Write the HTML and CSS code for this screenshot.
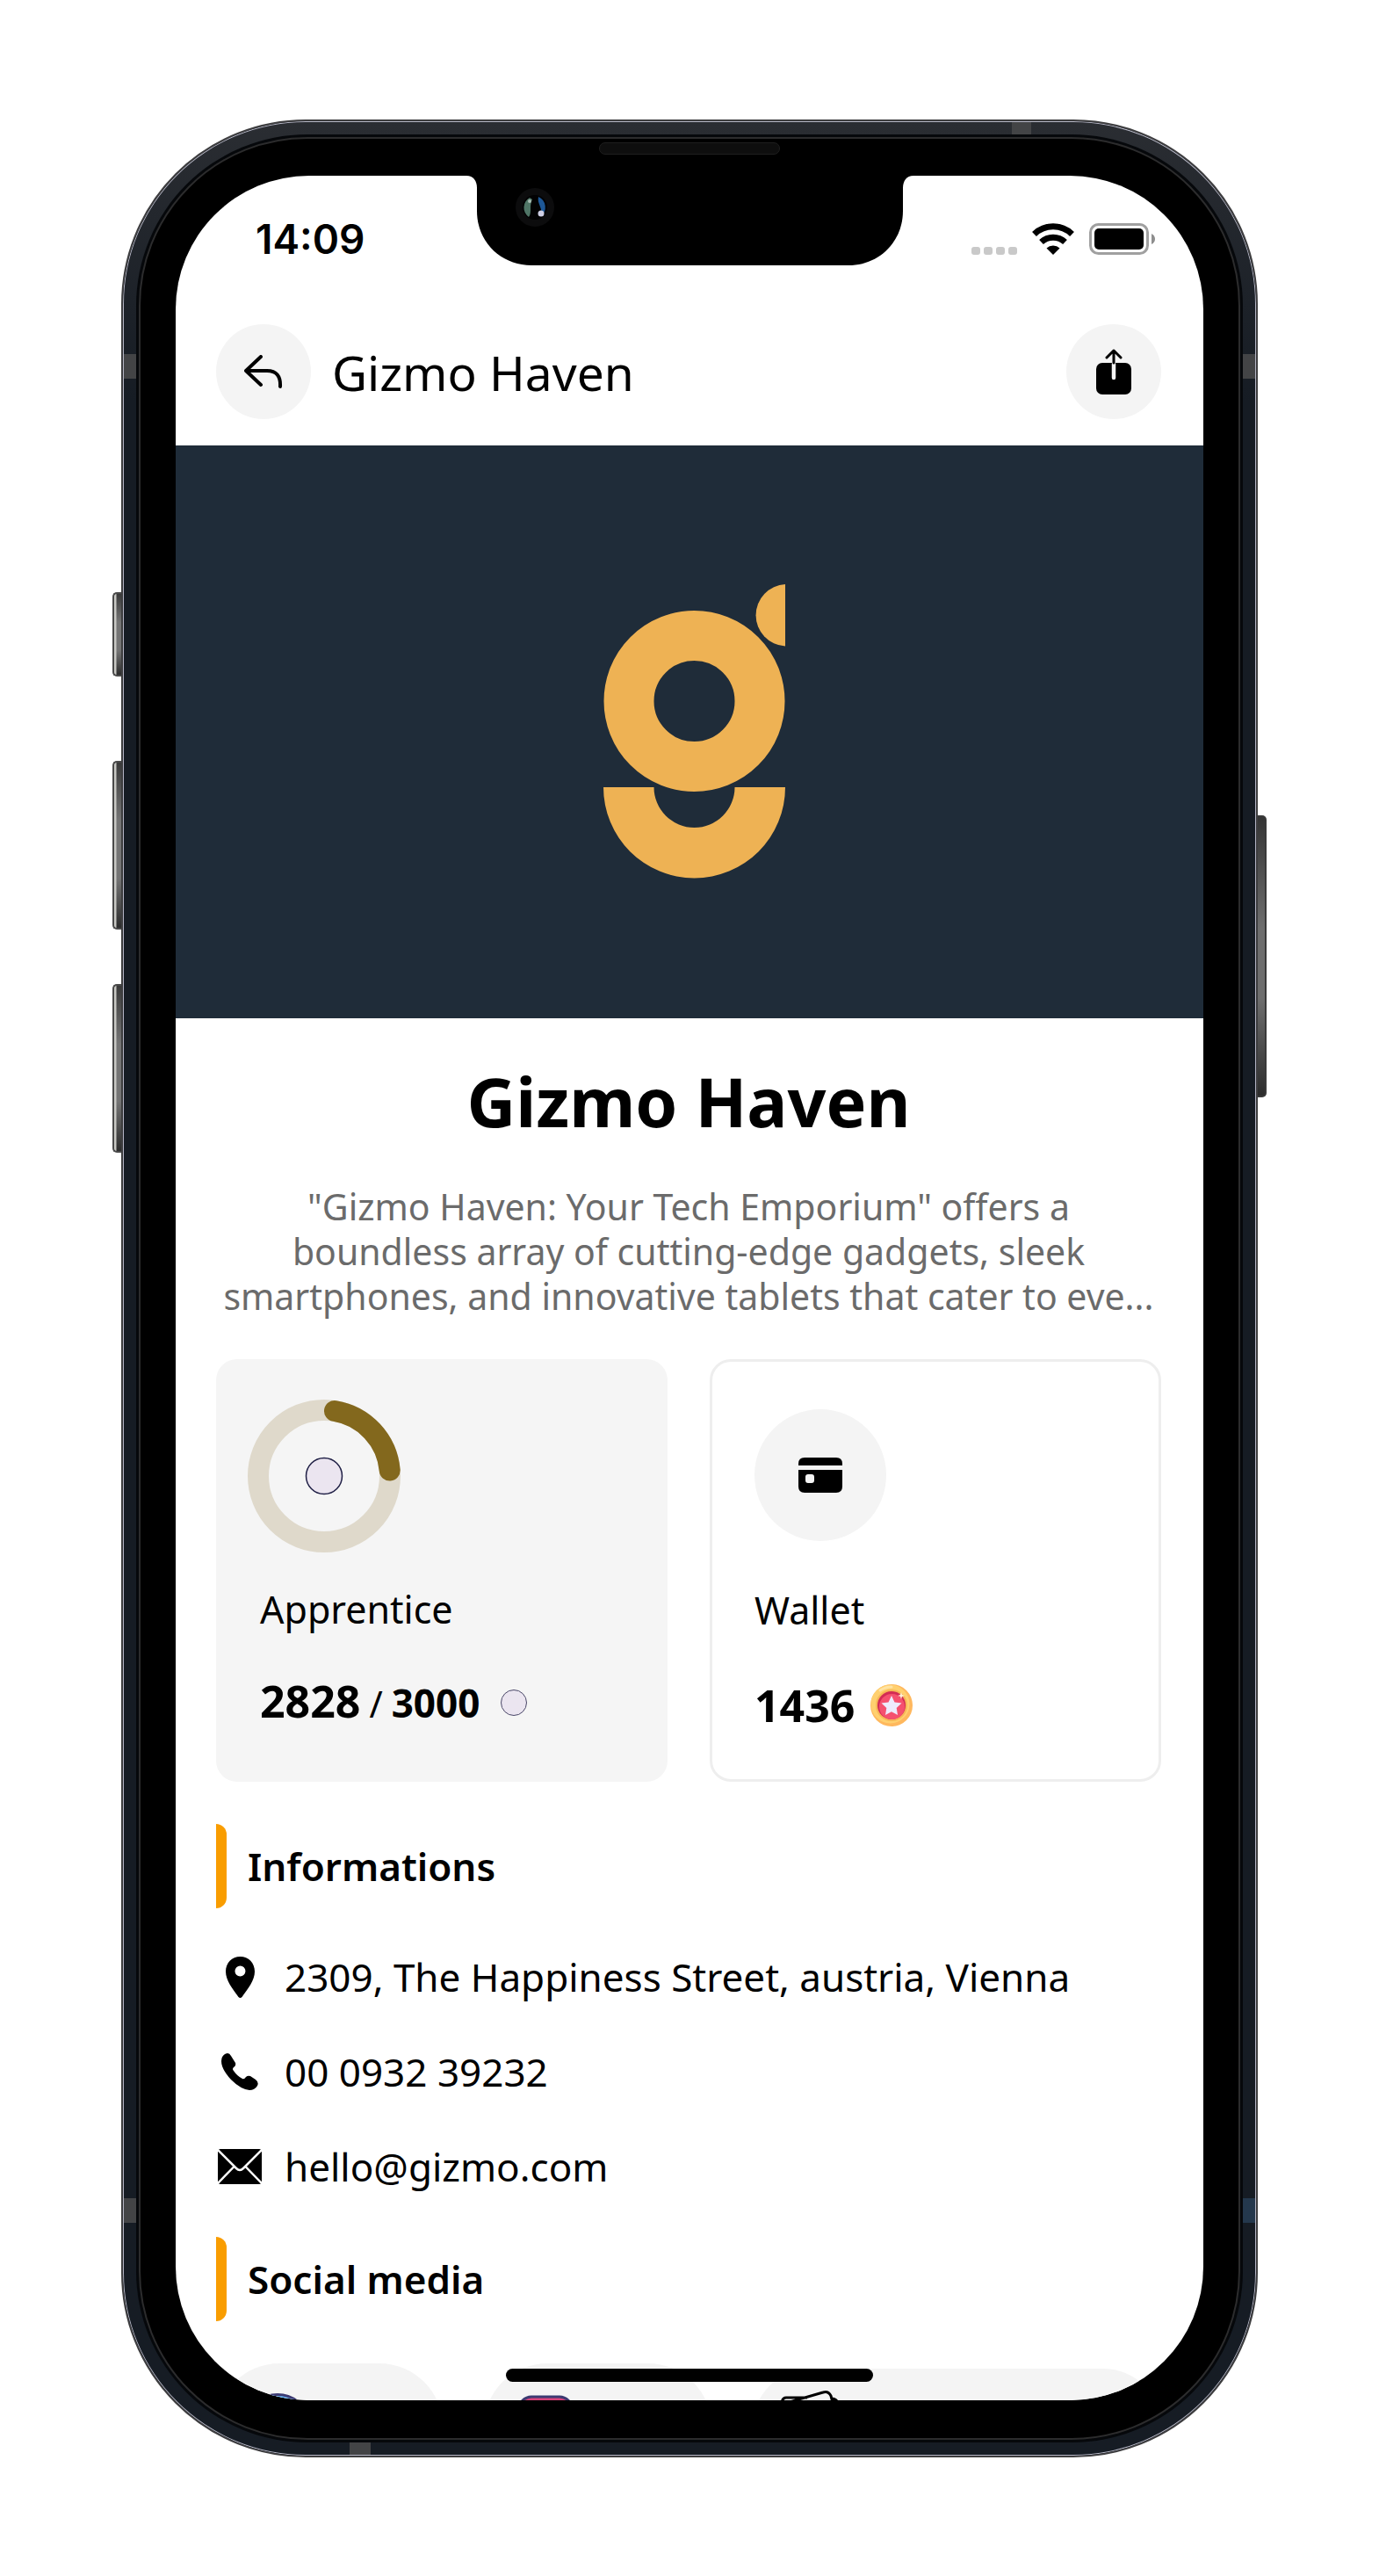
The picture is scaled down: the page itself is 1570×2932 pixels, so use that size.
FILE: index.html
```html
<!DOCTYPE html>
<html lang="en">
<head>
<meta charset="utf-8">
<meta name="viewport" content="width=device-width, initial-scale=1">
<title>Gizmo Haven</title>
<link rel="stylesheet" href="styles.css">
</head>
<body>
<div class="phone">
  <span class="side-key side-key-mute"></span>
  <span class="side-key side-key-up"></span>
  <span class="side-key side-key-down"></span>
  <span class="side-key side-key-power"></span>
  <span class="antenna antenna-top"></span>
  <span class="antenna antenna-bottom"></span>
  <span class="antenna antenna-left antenna-high"></span>
  <span class="antenna antenna-left antenna-low"></span>
  <span class="antenna antenna-right antenna-high"></span>
  <span class="antenna antenna-right antenna-low antenna-blue"></span>

  <div class="bezel">
    <span class="speaker"></span>
    <div class="screen">
      <svg class="notch" viewBox="0 0 509 102" aria-hidden="true">
        <path d="M0 0C8 0 12 6 12 14V40C12 76 40 102 74 102H435C469 102 497 76 497 40V14C497 6 501 0 509 0Z"/>
        <circle cx="78" cy="36" r="22" fill="#0c0c0d"/>
        <circle cx="78" cy="36" r="14" fill="#020203"/>
        <path d="M72 25A13 13 0 0 0 71 47C75 42 71 34 75 27Z" fill="#4f7566"/>
        <path d="M82 24A13 13 0 0 1 85 46C88 38 80 32 82 24Z" fill="#1d5796"/>
        <circle cx="85" cy="43" r="3.500" fill="#cfd0e6"/>
        <circle cx="72" cy="29" r="2" fill="#a9bdb4"/>
      </svg>

      <div class="status">
        <span class="clock">14:09</span>
        <span class="status-icons">
          <svg class="signal" width="52" height="36" viewBox="0 0 52 36" fill="#c9c9c9" aria-hidden="true">
            <rect x="0" y="27" width="10" height="9" rx="3"/><rect x="14" y="27" width="10" height="9" rx="3"/><rect x="28" y="27" width="10" height="9" rx="3"/><rect x="42" y="27" width="10" height="9" rx="3"/>
          </svg>
          <svg class="wifi" width="50" height="36" viewBox="0 0 50 36" aria-hidden="true">
            <path d="M3.500 12.500A31 31 0 0 1 46.500 12.500" fill="none" stroke="#000" stroke-width="7"/>
            <path d="M11.500 21.500A20 20 0 0 1 38.500 21.500" fill="none" stroke="#000" stroke-width="7"/>
            <path d="M25 36L17.500 28.500A11 11 0 0 1 32.500 28.500Z"/>
          </svg>
          <svg class="battery" width="75" height="36" viewBox="0 0 75 36" aria-hidden="true">
            <rect x="1.500" y="1.500" width="65" height="33" rx="9" fill="none" stroke="#a0a0a0" stroke-width="3"/>
            <rect x="6" y="6" width="56" height="24" rx="5"/>
            <path d="M71 12Q75 14 75 18T71 24Z" fill="#8e8e8e"/>
          </svg>
        </span>
      </div>

      <header class="appbar">
        <button class="round-button" type="button" aria-label="Back">
          <svg width="44" height="38" viewBox="0 0 44 38" fill="none" stroke="#000" stroke-width="4" stroke-linecap="round" stroke-linejoin="round"><path d="M19 2L2 18L19 34M2 18H26Q42 18 41 36"/></svg>
        </button>
        <span class="appbar-title">Gizmo Haven</span>
        <button class="round-button" type="button" aria-label="Share">
          <svg width="40" height="54" viewBox="0 0 40 54"><rect y="17" width="40" height="36" rx="7"/><path d="M20 18V34" stroke="#f4f4f4" stroke-width="4.500" stroke-linecap="round"/><path d="M20 17V3M12 11L20 3L28 11" fill="none" stroke="#000" stroke-width="3" stroke-linecap="round" stroke-linejoin="round"/></svg>
        </button>
      </header>

      <div class="hero">
        <svg width="207" height="335" viewBox="0 0 207 335" fill="#eeb254" role="img" aria-label="Gizmo Haven logo">
          <path d="M207 0V70.500A35.300 35.300 0 0 1 207 0Z"/>
          <circle cx="103.500" cy="133" r="74.500" fill="none" stroke="#eeb254" stroke-width="57"/>
          <path d="M0 231H57.500A46 46 0 0 0 149.500 231H207A103.500 103.500 0 0 1 0 231Z"/>
        </svg>
      </div>

      <main class="content">
        <h1 class="store-name">Gizmo Haven</h1>
        <p class="about">"Gizmo Haven: Your Tech Emporium" offers a<br>boundless array of cutting-edge gadgets, sleek<br>smartphones, and innovative tablets that cater to eve...</p>

        <div class="cards">
          <section class="card card-level">
            <svg class="ring" width="174" height="174" viewBox="0 0 174 174" fill="none" aria-hidden="true">
              <circle cx="87" cy="87" r="75" stroke="#dfd9cb" stroke-width="24"/>
              <path d="M99 13A75 75 0 0 1 161.700 80.500" stroke="#83681d" stroke-width="24" stroke-linecap="round"/>
              <circle cx="87" cy="87" r="20.500" fill="#ebe5f0" stroke="#1f1f45" stroke-width="1.500"/>
            </svg>
            <h2 class="card-label">Apprentice</h2>
            <p class="card-value">
              <span class="score"><b class="amount">2828</b><span class="slash">/</span><b class="goal">3000</b></span>
              <svg class="point" width="30" height="30" viewBox="0 0 30 30" aria-hidden="true"><circle cx="15" cy="15" r="14.500" fill="#ebe5f0" stroke="#4a4768"/></svg>
            </p>
          </section>
          <section class="card card-wallet">
            <span class="wallet-badge">
              <svg width="50" height="40" viewBox="0 0 50 40" aria-hidden="true"><path d="M0 9V7Q0 0 7 0H43Q50 0 50 7V9Z"/><path fill-rule="evenodd" d="M0 14H50V33Q50 40 43 40H7Q0 40 0 33ZM11 19Q8 19 8 22V26Q8 29 11 29H15Q18 29 18 26V22Q18 19 15 19Z"/></svg>
            </span>
            <h2 class="card-label">Wallet</h2>
            <p class="card-value">
              <b class="amount">1436</b>
              <svg class="coin" width="48" height="48" viewBox="0 0 48 48" aria-hidden="true">
                <circle cx="24" cy="24" r="24" fill="#ffb85e"/>
                <circle cx="22.500" cy="22.500" r="22" fill="#ffd06f"/>
                <circle cx="24" cy="24" r="18" fill="#f7b657"/>
                <circle cx="24" cy="24" r="16" fill="#d32b54"/>
                <circle cx="24.500" cy="25.500" r="14.500" fill="#f5506f"/>
                <path d="M24 13L27.500 20.500L35.500 21.500L29.700 27L31 35L24 31.300L17 35L18.300 27L12.500 21.500L20.500 20.500Z" fill="#eeeafd"/>
                <path d="M35 9L36 12L39 13L36 14L35 17L34 14L31 13L34 12Z" fill="#fff0d8"/>
                <path d="M11 7Q17 3 24 3" fill="none" stroke="#ffe3a3" stroke-width="3" stroke-linecap="round"/>
              </svg>
            </p>
          </section>
        </div>

        <h2 class="section-title">Informations</h2>
        <ul class="contacts">
          <li class="contact">
            <span class="contact-icon"><svg width="33" height="47" viewBox="0 0 33 47" aria-hidden="true"><path fill-rule="evenodd" d="M16.500 0C7 0 0 7 0 17C0 27 8 37 14.500 46Q16.500 48 18.500 46C25 37 33 27 33 17C33 7 26 0 16.500 0ZM16.500 10.500A6 6 0 1 1 16.400 22.500A6 6 0 1 1 16.500 10.500Z"/></svg></span>
            <span>2309, The Happiness Street, austria, Vienna</span>
          </li>
          <li class="contact">
            <span class="contact-icon"><svg width="42" height="42" viewBox="0 0 42 42" aria-hidden="true"><path d="M5 0.500Q9 -1 11 3L16 11Q17 14 14 16Q12 18 14 20Q18 26 24 29Q26 30 28 27Q30 25 33 26L39 30Q43 33 41 37Q38 42 32 42Q22 41 11 30Q0 18 0 9Q0 3 5 0.500Z"/></svg></span>
            <a href="tel:00093239232">00 0932 39232</a>
          </li>
          <li class="contact">
            <span class="contact-icon"><svg width="50" height="40" viewBox="0 0 50 40" aria-hidden="true"><rect width="50" height="40" rx="3"/><path d="M-1 0L21 22Q25 26 29 22L51 0M18.500 20L-1 40M31.500 20L51 40" fill="none" stroke="#fff" stroke-width="2.500"/></svg></span>
            <a href="mailto:hello@gizmo.com">hello@gizmo.com</a>
          </li>
        </ul>

        <h2 class="section-title">Social media</h2>
        <nav class="socials">
          <a class="social" href="#facebook" aria-label="Facebook"><svg width="76" height="76" viewBox="0 0 76 76"><circle cx="38" cy="38" r="36.500" fill="#5fb4f7" stroke="#3c3a72" stroke-width="3"/></svg></a>
          <a class="social" href="#instagram" aria-label="Instagram"><svg width="76" height="76" viewBox="0 0 76 76"><rect x="8" y="4" width="60" height="68" rx="14" fill="#d6437a" stroke="#3c3a72" stroke-width="3"/></svg></a>
          <a class="social social-wide" href="#gallery" aria-label="Gallery"><svg width="76" height="84" viewBox="0 0 76 84" fill="none" stroke="#000" stroke-width="3" stroke-linejoin="round"><path d="M30 9H6Q1 9 1 17V64M3 16L48 3Q54 1 57 7L72 64M58 10Q65 10 66 20"/></svg></a>
        </nav>
      </main>
      <span class="home-indicator"></span>
    </div>
  </div>
</div>
</body>
</html>
```
FILE: styles.css
```css
* { box-sizing: border-box; }

body {
  margin: 0;
  padding: 136px 138px 135px;
  background: #fff;
  color: #000;
  font-family: "Noto Sans", "Open Sans", sans-serif;
  font-size: 44px;
  line-height: 60px;
}

h1, h2, p, ul { margin: 0; padding: 0; }
ul { list-style: none; }
a { color: inherit; text-decoration: none; }
svg { display: block; flex: none; }

/* Device frame */
.phone {
  position: relative;
  padding: 18px;
  border: 2px solid #3d3d3f;
  border-radius: 210px;
  background: linear-gradient(#2a2d32, #161c24 12%, #161c24);
  box-shadow: inset 0 0 0 1px #b4b5c4;
}

.bezel {
  position: relative;
  padding: 42px 40px 43px;
  border: 2px solid #2c2c2d;
  border-radius: 192px;
  background: #000;
  box-shadow: 0 0 0 3px #06080b;
}

.side-key {
  position: absolute;
  left: -12px;
  width: 10px;
  border: 2px solid #4a4a4a;
  border-right: 0;
  border-radius: 5px 0 0 5px;
  background: linear-gradient(90deg, #c8c8c4 2px, transparent 3px), linear-gradient(#3a3a3a, #747474 35%, #747474 70%, #2c2c2c);
}
.side-key-mute { top: 536px; height: 96px; }
.side-key-up { top: 728px; height: 192px; }
.side-key-down { top: 982px; height: 192px; }
.side-key-power {
  top: 790px;
  right: -12px;
  left: auto;
  height: 321px;
  border: 2px solid #3a3a3a;
  border-left: 0;
  border-radius: 0 5px 5px 0;
  background: linear-gradient(#353535, #6e6e6e 40%, #6e6e6e 65%, #2c2c2c);
}

.antenna { position: absolute; background: #434446; }
.antenna-top { top: 1px; right: 256px; width: 22px; height: 14px; }
.antenna-bottom { bottom: 1px; left: 258px; width: 24px; height: 14px; }
.antenna-left { left: 1px; width: 14px; height: 28px; }
.antenna-right { right: 1px; width: 14px; height: 28px; }
.antenna-high { top: 265px; }
.antenna-low { bottom: 265px; }
.antenna-blue { background: #24384d; }

.speaker {
  position: absolute;
  top: 4px;
  right: 0;
  left: 0;
  width: 206px;
  height: 14px;
  margin: 0 auto;
  border: 1px solid #1f1f1f;
  border-radius: 7px;
  background: #0e0e0e;
}

.screen {
  position: relative;
  aspect-ratio: 1170 / 2532;
  overflow: hidden;
  border-radius: 152px;
  background: #fff;
}

.notch {
  position: absolute;
  top: 0;
  right: 0;
  left: 0;
  width: 509px;
  height: 102px;
  margin: 0 auto;
}

.home-indicator {
  position: absolute;
  right: 0;
  bottom: 21px;
  left: 0;
  width: 418px;
  height: 15px;
  margin: 0 auto;
  border-radius: 8px;
  background: #000;
}

/* Status bar and app bar */
.status {
  display: flex;
  align-items: center;
  justify-content: space-between;
  padding: 42px 55px 67px 91px;
}
.clock { font: 600 46px/60px Inter, sans-serif; }
.status-icons { display: flex; gap: 16px; }

.appbar {
  display: flex;
  align-items: center;
  gap: 24px;
  padding: 0 48px 30px 46px;
}
.appbar-title { flex: 1; padding-top: 2px; font-size: 55px; }
.round-button {
  display: grid;
  place-items: center;
  width: 108px;
  height: 108px;
  padding: 0;
  border: 0;
  border-radius: 50%;
  background: #f4f4f4;
}

.hero {
  display: flex;
  justify-content: center;
  padding: 158px 0 159px 10px;
  background: #1f2c39;
}

/* Store details */
.content { padding: 47px 48px 0 46px; }
.store-name {
  margin-bottom: 46px;
  font-size: 77px;
  line-height: 96px;
  text-align: center;
}
.about {
  margin-bottom: 46px;
  color: #6b6b6b;
  font-size: 41px;
  line-height: 51px;
  text-align: center;
  white-space: nowrap;
}

.cards {
  display: grid;
  grid-template-columns: 1fr 1fr;
  gap: 48px;
  margin-bottom: 48px;
}
.card { border-radius: 24px; }
.card-level { padding: 46px 36px 59px; background: #f5f5f5; }
.card-level .card-label { margin: 35px 0 44px 14px; }
.card-level .card-value { margin-left: 14px; }
.card-wallet { padding: 54px 48px; border: 3px solid #eee; }
.card-wallet .card-label { margin: 49px 0 48px; }
.wallet-badge {
  display: grid;
  place-items: center;
  width: 150px;
  height: 150px;
  border-radius: 50%;
  background: #f4f4f4;
}
.card-label { font-size: 43px; font-weight: 400; }
.card-value { display: flex; align-items: center; gap: 18px; }
.score { display: flex; align-items: baseline; gap: 10px; }
.amount { font-size: 50px; }
.slash { font-size: 41px; }
.point { margin-left: 6px; }

.section-title {
  position: relative;
  margin-bottom: 48px;
  padding: 18px 36px;
  font-size: 44px;
  font-weight: 600;
}
.section-title::before {
  position: absolute;
  top: 0;
  bottom: 0;
  left: 0;
  width: 12px;
  border-radius: 0 12px 12px 0;
  background: #f99d00;
  content: "";
}

.contacts {
  display: flex;
  flex-direction: column;
  gap: 48px;
  margin-bottom: 50px;
}
.contact { display: flex; align-items: center; gap: 24px; }
.contact-icon { display: flex; justify-content: center; width: 54px; }

.socials {
  display: grid;
  grid-template-columns: 5fr 5fr 9fr;
  gap: 47px;
  align-items: center;
}
.social {
  display: flex;
  align-items: center;
  height: 144px;
  padding: 0 32px;
  border-radius: 72px;
  background: #f4f4f4;
}
.social-wide { height: 132px; }
```
